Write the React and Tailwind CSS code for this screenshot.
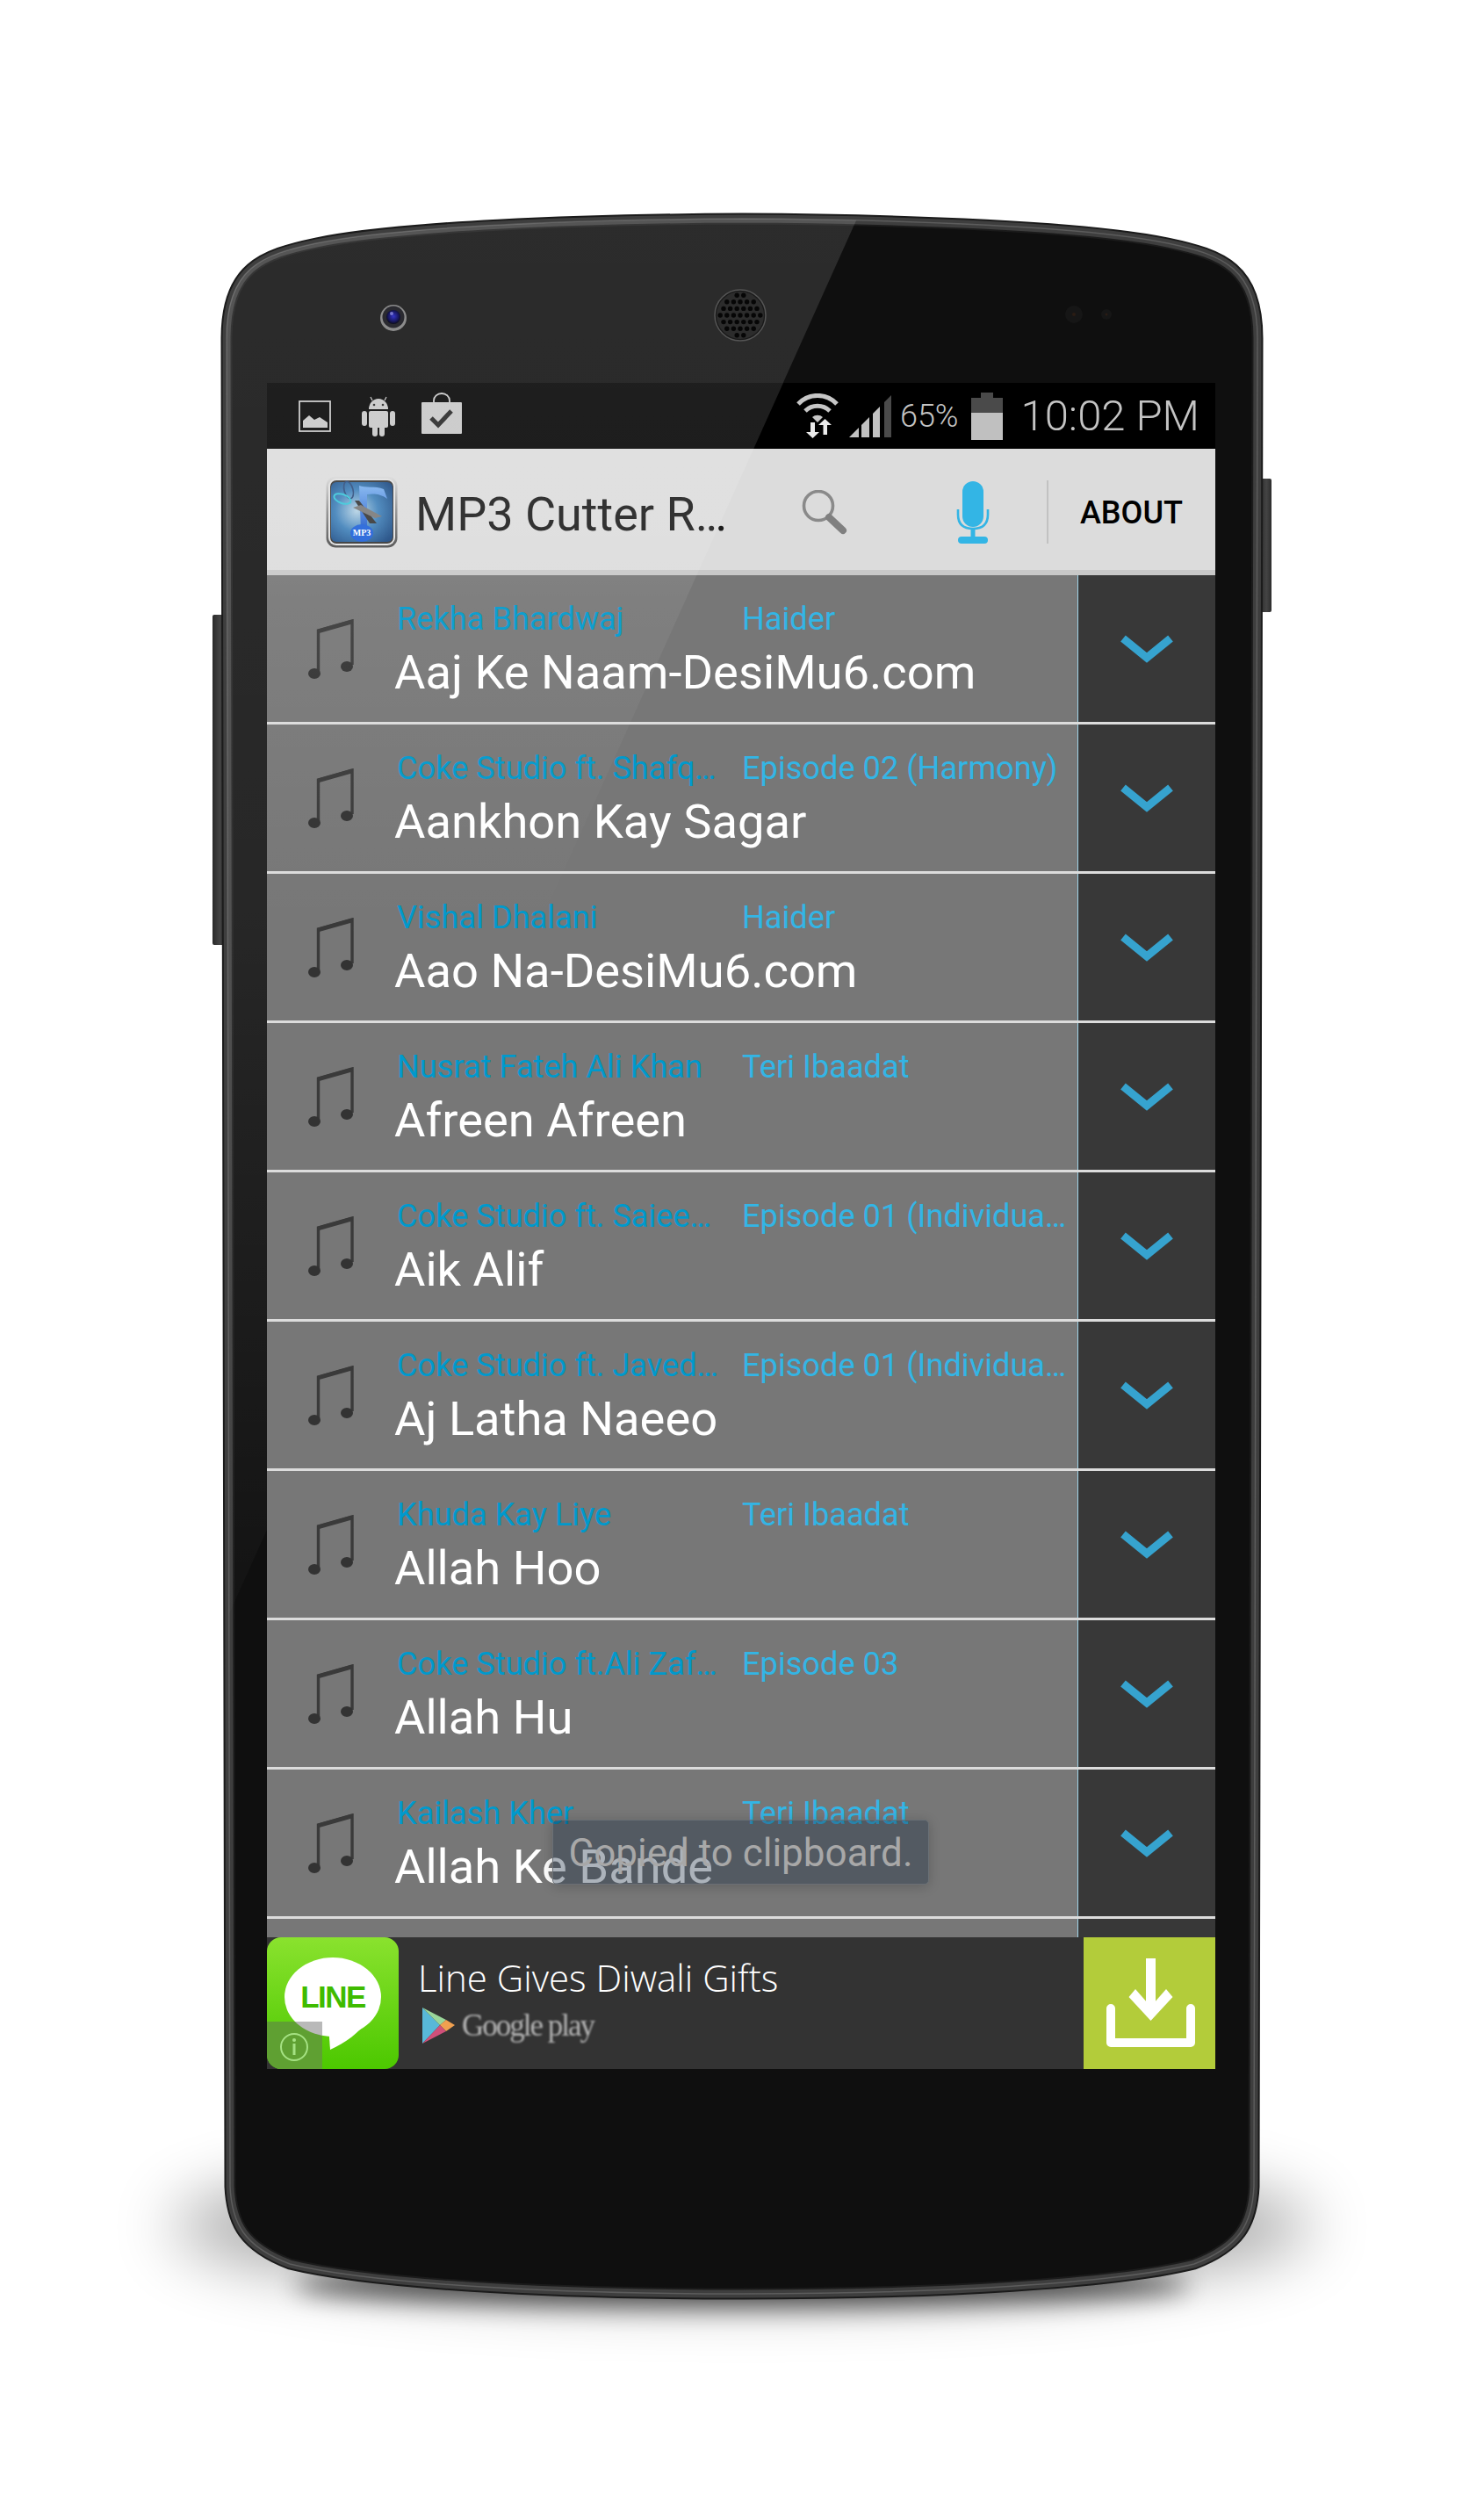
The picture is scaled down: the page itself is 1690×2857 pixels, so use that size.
import React from 'react';

const SONGS = [
	{ artist: 'Rekha Bhardwaj', album: 'Haider', title: 'Aaj Ke Naam-DesiMu6.com' },
	{ artist: 'Coke Studio ft. Shafq…', album: 'Episode 02 (Harmony)', title: 'Aankhon Kay Sagar' },
	{ artist: 'Vishal Dhalani', album: 'Haider', title: 'Aao Na-DesiMu6.com' },
	{ artist: 'Nusrat Fateh Ali Khan', album: 'Teri Ibaadat', title: 'Afreen Afreen' },
	{ artist: 'Coke Studio ft. Saiee…', album: 'Episode 01 (Individua…', title: 'Aik Alif' },
	{ artist: 'Coke Studio ft. Javed…', album: 'Episode 01 (Individua…', title: 'Aj Latha Naeeo' },
	{ artist: 'Khuda Kay Liye', album: 'Teri Ibaadat', title: 'Allah Hoo' },
	{ artist: 'Coke Studio ft.Ali Zaf…', album: 'Episode 03', title: 'Allah Hu' },
	{ artist: 'Kailash Kher', album: 'Teri Ibaadat', title: 'Allah Ke Bande' },
	{ artist: '', album: '', title: '' },
];

// Mid line of the metal band round the phone
const BODY =
	'M845 249 C660 250 450 258 360 277 C298 290 258 305 258 385 L262 2490 C264 2532 278 2558 330 2578 C420 2600 620 2612 845 2612 C1070 2612 1270 2600 1360 2578 C1412 2558 1426 2532 1428 2490 L1432 385 C1432 305 1392 290 1330 277 C1240 258 1030 250 845 249 Z';

// Speaker holes on a staggered grid
const speakerHoles = [];
for (let row = -3; row <= 3; row++) {
	for (let col = -4; col <= 4; col++) {
		const x = col * 7.6 + (row % 2 === 0 ? 0 : 3.8);
		const y = row * 7.6;
		if (Math.hypot(x, y) < 24.5) speakerHoles.push([843 + x, 359 + y]);
	}
}

const PhoneShell = () => (
	<svg className="absolute inset-0" width="1690" height="2857" viewBox="0 0 1690 2857">
		<defs>
			<filter id="blurWide" x="-20%" y="-100%" width="140%" height="300%">
				<feGaussianBlur stdDeviation="36" />
			</filter>
			<filter id="blurTight" x="-20%" y="-100%" width="140%" height="300%">
				<feGaussianBlur stdDeviation="14" />
			</filter>
			<linearGradient id="sheen" gradientUnits="userSpaceOnUse" x1="0" y1="250" x2="0" y2="2000">
				<stop offset="0" stopColor="#fff" stopOpacity="0.12" />
				<stop offset="0.45" stopColor="#fff" stopOpacity="0.1" />
				<stop offset="1" stopColor="#fff" stopOpacity="0" />
			</linearGradient>
			<linearGradient id="button" x1="0" y1="0" x2="1" y2="0">
				<stop offset="0" stopColor="#2a2a2a" />
				<stop offset="0.6" stopColor="#444" />
				<stop offset="1" stopColor="#2c2c2c" />
			</linearGradient>
			<radialGradient id="lens" cx="0.5" cy="0.45" r="0.55">
				<stop offset="0" stopColor="#3535c8" />
				<stop offset="0.7" stopColor="#16165a" />
				<stop offset="1" stopColor="#0c0c18" />
			</radialGradient>
			<clipPath id="bodyClip">
				<path d={BODY} />
			</clipPath>
		</defs>

		{/* Floor shadow */}
		<ellipse cx="845" cy="2535" rx="650" ry="80" fill="#000" opacity="0.34" filter="url(#blurWide)" />
		<ellipse cx="845" cy="2602" rx="510" ry="26" fill="#000" opacity="0.62" filter="url(#blurTight)" />

		{/* Side buttons */}
		<rect x="242" y="700" width="14" height="376" rx="2" fill="url(#button)" />
		<rect x="1434" y="545" width="14" height="152" rx="2" fill="url(#button)" />

		{/* Body */}
		<path d={BODY} fill="#0f0f0f" stroke="#1b1b1b" strokeWidth="13" />
		<path d={BODY} fill="none" stroke="#3e3e3e" strokeWidth="9" />
		<path d={BODY} fill="none" stroke="#5c5c5c" strokeWidth="1.5" />

		{/* Glass reflection */}
		<g clipPath="url(#bodyClip)">
			<polygon points="980,240 150,2084 150,240" fill="url(#sheen)" />
		</g>

		{/* Camera */}
		<circle cx="448" cy="362" r="15" fill="#8c8c8c" />
		<circle cx="448" cy="361" r="12.5" fill="#2a2a30" />
		<circle cx="448" cy="361" r="8" fill="url(#lens)" />
		<circle cx="446" cy="357" r="2" fill="#9a9af0" opacity="0.7" />

		{/* Speaker */}
		<circle cx="843" cy="359" r="29" fill="#1a1a1a" stroke="#555" strokeWidth="1.5" />
		<circle cx="843" cy="359" r="27" fill="#2c2c2c" />
		{speakerHoles.map(([x, y]) => (
			<circle key={`${x}-${y}`} cx={x} cy={y} r="2.7" fill="#060606" />
		))}

		{/* Sensors */}
		<circle cx="1223" cy="358" r="10" fill="#161616" />
		<circle cx="1223" cy="358" r="2" fill="#2a1c14" />
		<circle cx="1260" cy="358" r="6" fill="#161616" />
		<circle cx="1260" cy="358" r="1.5" fill="#2a1c14" />
	</svg>
);

const ImageIcon = () => (
	<svg className="w-[37px] h-[36px] shrink-0" viewBox="0 0 37 36">
		<rect x="1" y="1" width="35" height="34" fill="none" stroke="#c6c6c6" strokeWidth="1.8" />
		<path d="M5 31 V23 L12 17 L18 22 L24 19 L33 25 V31 Z" fill="#c6c6c6" />
	</svg>
);

const AndroidIcon = () => (
	<svg className="w-[38px] h-[46px] shrink-0 ml-[35px]" viewBox="0 0 38 46">
		<g fill="#c6c6c6">
			<path d="M8 15 A11 12 0 0 1 30 15 Z" />
			<rect x="8" y="17" width="22" height="19" rx="2" />
			<rect x="0" y="17" width="6" height="17" rx="3" />
			<rect x="32" y="17" width="6" height="17" rx="3" />
			<rect x="12" y="32" width="6" height="14" rx="3" />
			<rect x="20" y="32" width="6" height="14" rx="3" />
		</g>
		<path d="M12 5 L10 1 M26 5 L28 1" stroke="#c6c6c6" strokeWidth="1.2" />
		<circle cx="14" cy="10" r="1.3" fill="#222" />
		<circle cx="24" cy="10" r="1.3" fill="#222" />
	</svg>
);

const BagIcon = () => (
	<svg className="w-[46px] h-[47px] shrink-0 ml-[30px] -mt-[6px]" viewBox="0 0 46 47">
		<path d="M14 12 V9 A9 8 0 0 1 32 9 V12" fill="none" stroke="#c6c6c6" strokeWidth="1.8" />
		<rect x="0" y="11" width="46" height="36" rx="1" fill="#c6c6c6" />
		<path d="M11 29 L19 37 L34 21" fill="none" stroke="#222" strokeWidth="5" />
	</svg>
);

const WifiIcon = () => (
	<svg className="w-[50px] h-[51px] shrink-0" viewBox="0 0 50 51">
		<g fill="none" stroke="#c6c6c6" strokeLinecap="butt">
			<path d="M3 12 A30 30 0 0 1 47 12" strokeWidth="5" />
			<path d="M11 20 A20 20 0 0 1 39 20" strokeWidth="5" />
		</g>
		<path d="M19 27 A9 9 0 0 1 31 27 L25 33 Z" fill="#c6c6c6" />
		<path d="M22 33 V44 H27 L19.5 51 L12 44 H17 V33 Z" fill="#fff" opacity="0.92" />
		<path d="M31.5 47 V36 H26 L33.5 29 L41 36 H36 V47 Z" fill="#fff" opacity="0.92" />
	</svg>
);

const SignalIcon = () => (
	<svg className="w-[48px] h-[48px] shrink-0 ml-[11px]" viewBox="0 0 48 48">
		<polygon points="0,48 11,37 11,48" fill="#c2c2c2" />
		<polygon points="14,34 23,25 23,48 14,48" fill="#c2c2c2" />
		<polygon points="27,21 35,13 35,48 27,48" fill="#c2c2c2" />
		<polygon points="40,8 48,0 48,48 40,48" fill="#4a4a4a" />
	</svg>
);

const BatteryIcon = () => (
	<div className="w-[36px] h-[54px] shrink-0 ml-[15px] flex flex-col items-center">
		<div className="w-[14px] h-[6px] bg-[#4a4a4a]" />
		<div className="w-full h-[17px] bg-[#4a4a4a]" />
		<div className="w-full flex-1 bg-[#c0c0c0]" />
	</div>
);

const AppLogo = () => (
	<svg className="w-[82px] h-[82px] shrink-0" viewBox="0 0 82 82">
		<defs>
			<linearGradient id="frame" x1="0" y1="0" x2="0" y2="1">
				<stop offset="0" stopColor="#dadada" />
				<stop offset="0.5" stopColor="#8a8a8a" />
				<stop offset="1" stopColor="#4a4a4a" />
			</linearGradient>
			<radialGradient id="tile" cx="0.42" cy="0.48" r="0.7">
				<stop offset="0" stopColor="#b5d2e4" />
				<stop offset="0.5" stopColor="#3d7fb8" />
				<stop offset="1" stopColor="#18467f" />
			</radialGradient>
			<linearGradient id="noteFill" x1="0" y1="0" x2="0" y2="1">
				<stop offset="0" stopColor="#7ab0ee" />
				<stop offset="1" stopColor="#1a55c8" />
			</linearGradient>
		</defs>
		<rect x="0.5" y="0.5" width="81" height="81" rx="11" fill="url(#frame)" />
		<rect x="3" y="3" width="76" height="76" rx="9" fill="#e2e2e2" />
		<rect x="5" y="5" width="72" height="72" rx="7" fill="#333" />
		<rect x="6" y="7" width="70" height="68" rx="6" fill="url(#tile)" />
		<path d="M38 11 C44 14 56 11 66 15 L70 26 C62 20 54 20 47 21 L47 62 L40 62 Z" fill="url(#noteFill)" />
		<path d="M33 28 L38 28 L58 54 L50 54 Z" fill="#333" />
		<path d="M31 36 L40 33 L64 46 L56 48 Z" fill="#777" />
		<ellipse cx="26" cy="16" rx="5" ry="10" fill="none" stroke="#2a4a7a" strokeWidth="1.6" transform="rotate(-15 26 16)" />
		<ellipse cx="19" cy="26" rx="10" ry="5" fill="none" stroke="#38c4d8" strokeWidth="2" transform="rotate(20 19 26)" />
		<ellipse cx="41" cy="65" rx="13" ry="10" fill="#1c5fd8" />
		<text x="41" y="68" textAnchor="middle" fontFamily="Liberation Serif, serif" fontWeight="700" fontSize="10" fill="#fff">
			MP3
		</text>
	</svg>
);

const SearchIcon = () => (
	<svg className="w-[52px] h-[51px] shrink-0" viewBox="0 0 52 51">
		<circle cx="19" cy="18" r="16.5" fill="none" stroke="#8a8a8a" strokeWidth="3.6" />
		<path d="M31 31 L47 46" stroke="#808080" strokeWidth="8" strokeLinecap="round" />
	</svg>
);

const MicIcon = () => (
	<svg className="w-[38px] h-[71px] shrink-0 ml-[124px]" viewBox="0 0 38 71">
		<rect x="7" y="0" width="24" height="52" rx="12" fill="#33b5e5" />
		<path d="M2 32 V38 Q2 54 19 54 Q36 54 36 38 V32" fill="none" stroke="#33b5e5" strokeWidth="2.6" />
		<rect x="16.5" y="54" width="5" height="10" fill="#33b5e5" />
		<rect x="2" y="63" width="34" height="8" rx="4" fill="#33b5e5" />
	</svg>
);

const NoteIcon = () => (
	<svg className="w-[53px] h-[68px] blur-[0.5px]" viewBox="0 0 53 68">
		<path d="M11.5 60 V13 L50 2 V52" fill="none" stroke="#3a3a3a" strokeWidth="3.4" />
		<path d="M11 14 L50 3" stroke="#3a3a3a" strokeWidth="4.5" />
		<ellipse cx="7" cy="62" rx="7" ry="6" fill="#333" />
		<ellipse cx="44" cy="54" rx="7" ry="6" fill="#333" />
	</svg>
);

const Chevron = () => (
	<svg className="w-[60px] h-[32px]" viewBox="0 0 60 32">
		<polyline points="3,4 30,26 57,4" fill="none" stroke="#36a3cf" strokeWidth="9" />
	</svg>
);

const SongRow = ({ song }) => (
	<div className="flex h-[170px] shrink-0 border-b-[3px] border-[#dcdcdc]">
		<div className="flex flex-1 min-w-0 bg-[#777777]">
			<div className="w-[145px] shrink-0 pl-[47px] flex items-center">
				<NoteIcon />
			</div>
			<div className="flex-1 min-w-0 pt-[29px] font-['Roboto',sans-serif]">
				<div className="flex text-[36.2px] leading-[42px] whitespace-nowrap">
					<span className="w-[396px] pl-[3px] shrink-0 text-[#0099cc]">{song.artist}</span>
					<span className="text-[#33b5e5]">{song.album}</span>
				</div>
				<div className="mt-[8px] text-[54.3px] leading-[64px] text-white whitespace-nowrap">{song.title}</div>
			</div>
		</div>
		<div className="w-[157px] shrink-0 bg-[#383838] border-l border-[#9fd4e8] flex items-center justify-center pr-[1px]">
			<Chevron />
		</div>
	</div>
);

const LineTile = () => (
	<svg className="w-[150px] h-[150px] shrink-0" viewBox="0 0 150 150">
		<defs>
			<linearGradient id="lineGreen" x1="0" y1="0" x2="0" y2="1">
				<stop offset="0" stopColor="#8ae22e" />
				<stop offset="1" stopColor="#4cc800" />
			</linearGradient>
			<clipPath id="tileClip">
				<rect width="150" height="150" rx="16" />
			</clipPath>
			<clipPath id="infoClip">
				<rect x="0" y="96" width="63" height="54" />
			</clipPath>
		</defs>
		<g clipPath="url(#tileClip)">
			<rect width="150" height="150" fill="url(#lineGreen)" />
			<ellipse cx="75" cy="68" rx="55" ry="45" fill="#fff" />
			<path d="M70 100 L72 128 C90 120 105 108 115 95 Z" fill="#fff" />
			<text x="75" y="80" textAnchor="middle" fontFamily="Liberation Sans, sans-serif" fontWeight="700" fontSize="35" fill="#3fbb00" letterSpacing="-1.5">
				LINE
			</text>
			<rect x="0" y="96" width="63" height="54" fill="#5fa032" />
			<g clipPath="url(#infoClip)">
				<ellipse cx="75" cy="68" rx="55" ry="45" fill="#b9b9b9" />
			</g>
			<circle cx="31" cy="125" r="15" fill="#5fa032" stroke="#a5e283" strokeWidth="2" />
			<circle cx="31" cy="117" r="2" fill="#a5e283" />
			<rect x="29.5" y="121" width="3" height="13" fill="#a5e283" />
		</g>
	</svg>
);

const PlayLogo = () => (
	<svg className="w-[37px] h-[41px] shrink-0" viewBox="0 0 37 41">
		<polygon points="0,0 20,20 0,41" fill="#58b8d8" />
		<polygon points="0,0 27,14 20,20" fill="#9ad69a" />
		<polygon points="27,14 37,20 27,27 20,20" fill="#f0a050" />
		<polygon points="0,41 20,20 27,27" fill="#d0507a" />
	</svg>
);

const DownloadIcon = () => (
	<svg className="w-[102px] h-[102px]" viewBox="0 0 102 102">
		<rect x="45" y="0" width="11" height="60" fill="#fff" />
		<polygon points="50.5,71 25.5,44 33,35 50.5,55 68,35 75.5,44" fill="#fff" />
		<path d="M5 57 V96 H96 V57" fill="none" stroke="#fff" strokeWidth="10" strokeLinejoin="round" strokeLinecap="round" />
	</svg>
);

const App = () => (
	<div className="relative w-[1690px] h-[2857px] overflow-hidden bg-white pt-[436px] pl-[304px]">
		<PhoneShell />

		<div className="relative w-[1080px] h-[1920px] flex flex-col font-['Roboto',sans-serif]">
			{/* Status bar */}
			<div className="h-[75px] shrink-0 bg-black flex items-center pl-[36px] pr-[18px]">
				<ImageIcon />
				<AndroidIcon />
				<BagIcon />
				<div className="ml-auto flex items-center">
					<WifiIcon />
					<SignalIcon />
					<span className="ml-[10px] text-[36px] leading-[42px] font-light text-[#c4c4c4]">65%</span>
					<BatteryIcon />
					<span className="ml-[20px] text-[49px] leading-[56px] font-light text-[#c4c4c4]">10:02 PM</span>
				</div>
			</div>

			{/* Action bar */}
			<div className="h-[144px] shrink-0 bg-[#dcdcdc] border-b-[6px] border-[#c8c8c8] flex items-center pl-[67px] pt-[6px]">
				<AppLogo />
				<div className="w-[460px] shrink-0 mt-[6px] pl-[20px] text-[54px] leading-[64px] text-[#1a1a1a] whitespace-nowrap">MP3 Cutter R…</div>
				<SearchIcon />
				<MicIcon />
				<div className="w-[2px] h-[72px] ml-[65px] bg-[#c2c2c2]" />
				<span className="ml-[36px] mt-[2px] text-[36px] leading-[42px] font-medium text-black">ABOUT</span>
			</div>

			{/* Song list */}
			<div className="relative h-[1551px] shrink-0 overflow-hidden bg-[#777777]">
				{SONGS.map((song, i) => (
					<SongRow key={i} song={song} />
				))}
				{/* Toast */}
				<div className="absolute left-[325px] top-[1417px] w-[429px] h-[74px] pt-[2px] rounded-[5px] border border-[#6a7076] bg-[#10243c]/35 shadow-[0_2px_14px_rgba(0,0,0,0.2)] flex items-center justify-center text-[44px] text-[#a8a8a8] whitespace-nowrap">
					Copied to clipboard.
				</div>
			</div>

			{/* Ad banner */}
			<div className="h-[150px] shrink-0 bg-[#333333] flex">
				<LineTile />
				<div className="ml-[22px] pt-[22px]">
					<div className="font-['Open_Sans',sans-serif] font-light text-[42px] leading-[48px] text-white whitespace-nowrap">Line Gives Diwali Gifts</div>
					<div className="mt-[10px] ml-[5px] flex items-center">
						<PlayLogo />
						<span className="ml-[8px] font-['Liberation_Serif',serif] text-[35px] leading-[40px] tracking-[-2px] text-[#b5b5b5] blur-[0.8px] whitespace-nowrap">Google play</span>
					</div>
				</div>
				<div className="ml-auto w-[150px] bg-[#b3cc3a] flex items-center justify-center pl-[3px] pb-[1px]">
					<DownloadIcon />
				</div>
			</div>

			{/* Reflection carried over the glass */}
			<svg className="absolute inset-0 pointer-events-none" width="1080" height="1920" viewBox="0 0 1080 1920">
				<defs>
					<linearGradient id="screenSheen" gradientUnits="userSpaceOnUse" x1="0" y1="0" x2="0" y2="620">
						<stop offset="0" stopColor="#fff" stopOpacity="0.12" />
						<stop offset="0.25" stopColor="#fff" stopOpacity="0.11" />
						<stop offset="0.4" stopColor="#fff" stopOpacity="0.06" />
						<stop offset="1" stopColor="#fff" stopOpacity="0" />
					</linearGradient>
				</defs>
				<polygon points="588,0 0,1306 0,0" fill="url(#screenSheen)" />
			</svg>
		</div>
	</div>
);

export default App;
